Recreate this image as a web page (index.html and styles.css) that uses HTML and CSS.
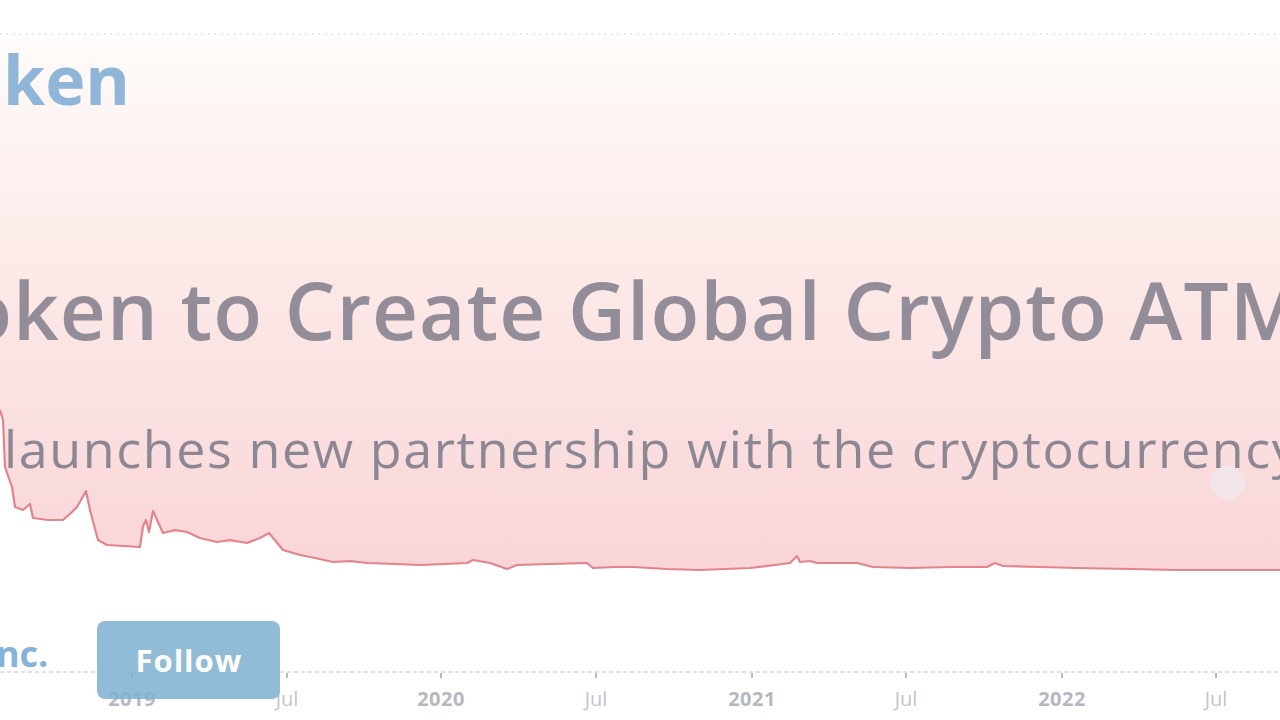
FILE: index.html
```html
<html>
<head>
    <title>Token to Create Global Crypto ATMs</title>
    <link rel="stylesheet" href="styles.css">
</head>
<body>
    <div class="stage">
        <svg class="chart" width="1280" height="720" viewBox="0 0 1280 720">
            <defs>
                <linearGradient id="area" x1="0" y1="0" x2="0" y2="1">
                    <stop offset="0" stop-color="#fefbf9"/>
                    <stop offset="0.4" stop-color="#fcebe9"/>
                    <stop offset="1" stop-color="#f9d5d8"/>
                </linearGradient>
            </defs>
            <line class="grid-top" x1="0" y1="34" x2="1280" y2="34"/>
            <path class="area" d="M0,38 L1280,38 L1280,570 L1177,570 L1077,568 L1003,566 L995,563 L987,567 L910,568 L873,567 L857,563 L817,563 L810,561 L800,562 L797,556 L790,563 L750,568 L700,570 L667,569 L633,567 L593,568 L587,563 L517,565 L507,569 L490,563 L473,560 L467,563 L420,565 L367,563 L333,562 L300,555 L283,550 L269,533 L247,543 L217,542 L187,532 L163,533 L153,511 L149,532 L146,520 L140,547 L107,545 L98,540 L90,510 L86,491 L77,507 L63,520 L33,518 L30,504 L23,510 L15,507 L12,487 L5,467 L3,420 L0,410 Z"/>
            <path class="line" d="M0,410 L3,420 L5,467 L12,487 L15,507 L23,510 L30,504 L33,518 L48,520 L63,520 L72,512 L77,507 L86,491 L90,510 L98,540 L107,545 L124,546 L140,547 L143,526 L146,520 L149,532 L153,511 L163,533 L175,530 L187,532 L200,538 L217,542 L230,540 L247,543 L260,538 L269,533 L283,550 L300,555 L315,558 L333,562 L350,561 L367,563 L395,564 L420,565 L445,564 L467,563 L473,560 L490,563 L507,569 L517,565 L550,564 L587,563 L593,568 L615,567 L633,567 L667,569 L700,570 L725,569 L750,568 L775,565 L790,563 L797,556 L800,562 L810,561 L817,563 L857,563 L873,567 L910,568 L950,567 L987,567 L995,563 L1003,566 L1040,567 L1077,568 L1130,569 L1177,570 L1280,570"/>
            <line class="axis" x1="0" y1="672" x2="1280" y2="672"/>
            <g class="ticks">
                <line x1="132" y1="673" x2="132" y2="678"/>
                <line x1="287" y1="673" x2="287" y2="678"/>
                <line x1="441" y1="673" x2="441" y2="678"/>
                <line x1="596" y1="673" x2="596" y2="678"/>
                <line x1="752" y1="673" x2="752" y2="678"/>
                <line x1="906" y1="673" x2="906" y2="678"/>
                <line x1="1062" y1="673" x2="1062" y2="678"/>
                <line x1="1216" y1="673" x2="1216" y2="678"/>
            </g>
            <g class="labels">
                <text class="year" x="132" y="706">2019</text>
                <text x="287" y="706">Jul</text>
                <text class="year" x="441" y="706">2020</text>
                <text x="596" y="706">Jul</text>
                <text class="year" x="752" y="706">2021</text>
                <text x="906" y="706">Jul</text>
                <text class="year" x="1062" y="706">2022</text>
                <text x="1216" y="706">Jul</text>
            </g>
            <circle class="mark" cx="1228" cy="483" r="17"/>
        </svg>

        <div class="overlay">
            <div class="brand">ken</div>
            <div class="headline">Token to Create Global Crypto ATMs</div>
            <div class="subline">launches new partnership with the cryptocurrency exchange</div>
            <div class="follow-row">
                <div class="company">Inc.</div>
                <div class="follow">Follow</div>
            </div>
        </div>
    </div>
</body>
</html>
```

FILE: styles.css
```css
html, body {
    margin: 0;
    background: #ffffff;
}
.stage {
    width: 1280px;
    height: 720px;
    position: relative;
    overflow: hidden;
    font-family: "Open Sans", "Liberation Sans", sans-serif;
}
.chart {
    position: absolute;
    top: 0;
    left: 0;
}
.grid-top {
    stroke: #d9d9dc;
    stroke-width: 1.5;
    stroke-dasharray: 1.5 5;
}
.area {
    fill: url(#area);
}
.line {
    fill: none;
    stroke: #e3838c;
    stroke-width: 2.2;
    stroke-linejoin: round;
}
.axis {
    stroke: #d6d8dc;
    stroke-width: 1.5;
    stroke-dasharray: 4 3;
}
.ticks line {
    stroke: #9ea2a8;
    stroke-width: 1.5;
}
.labels text {
    font-family: "Open Sans", "Liberation Sans", sans-serif;
    font-size: 20px;
    fill: #c2c5ca;
    text-anchor: middle;
}
.labels text.year {
    font-weight: 700;
    fill: #b5b9bf;
    letter-spacing: 0.5px;
}
.mark {
    fill: rgba(232, 242, 250, 0.45);
}
.overlay {
    position: absolute;
    top: 0;
    left: 0;
    right: 0;
    bottom: 0;
    display: flex;
    flex-direction: column;
    white-space: nowrap;
}
.brand {
    margin-top: 45px;
    padding-left: 3px;
    font-size: 68px;
    line-height: 68px;
    font-weight: 700;
    color: #8fb5d8;
}
.headline {
    margin-top: 156px;
    margin-left: -83px;
    font-size: 80px;
    line-height: 80px;
    font-weight: 600;
    letter-spacing: 1px;
    color: #928d98;
}
.subline {
    margin-top: 73px;
    padding-left: 4px;
    font-size: 52px;
    line-height: 52px;
    font-weight: 500;
    letter-spacing: 1.6px;
    color: #8c8792;
}
.follow-row {
    margin-top: 147px;
    display: flex;
    align-items: flex-start;
}
.company {
    margin-top: 15px;
    margin-left: -16px;
    font-size: 36px;
    line-height: 36px;
    font-weight: 700;
    color: #87b2da;
}
.follow {
    margin-left: 49px;
    width: 183px;
    height: 78px;
    border-radius: 8px;
    background: rgba(126, 176, 208, 0.85);
    color: #ffffff;
    font-size: 31px;
    font-weight: 700;
    letter-spacing: 1px;
    display: flex;
    align-items: center;
    justify-content: center;
}
```
